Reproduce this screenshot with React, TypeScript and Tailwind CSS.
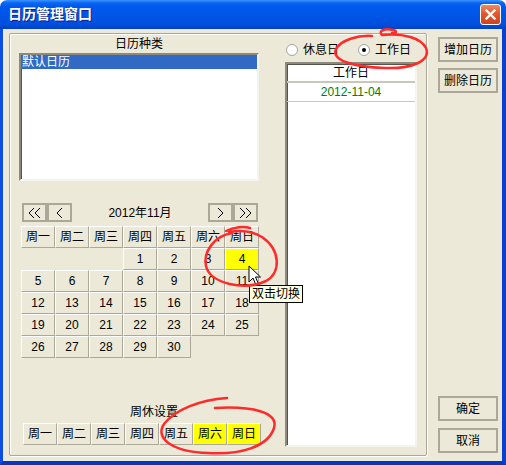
import React from "react";

const FONT = '"Liberation Sans","Noto Sans CJK SC",sans-serif';

const cellCls =
  "w-[34px] h-[22px] flex items-center justify-center border-t border-l border-t-white border-l-white border-b border-r border-b-[#aca899] border-r-[#aca899]";

function Chevron({ dir, double }: { dir: "l" | "r"; double?: boolean }) {
  const one = (x: number) =>
    dir === "l"
      ? `M${x + 5} 1 L${x} 6 L${x + 5} 11`
      : `M${x} 1 L${x + 5} 6 L${x} 11`;
  return (
    <svg width={double ? 13 : 7} height="12" viewBox={double ? "0 0 13 12" : "0 0 7 12"}>
      <path d={one(1)} fill="none" stroke="#000" strokeWidth="1" />
      {double && <path d={one(7)} fill="none" stroke="#000" strokeWidth="1" />}
    </svg>
  );
}

function NavBtn({ children }: { children: React.ReactNode }) {
  return (
    <div className="w-[25px] h-[19px] border-2 border-[#aca899] flex items-center justify-center bg-[#ece9d8]">
      {children}
    </div>
  );
}

function Btn({ label }: { label: string }) {
  return (
    <div className="w-[60px] h-[25px] border-2 border-[#aca899] flex items-center justify-center text-[12px] text-black">
      {label}
    </div>
  );
}

function Radio({ checked, label }: { checked?: boolean; label: string }) {
  return (
    <div className="flex items-center gap-[5px]">
      <div className="w-[12px] h-[12px] rounded-full border border-[#a3a3a3] bg-white flex items-center justify-center">
        {checked && <div className="w-[4px] h-[4px] rounded-full bg-black" />}
      </div>
      <span className="text-[12px] text-black">{label}</span>
    </div>
  );
}

const weekNames = ["周一", "周二", "周三", "周四", "周五", "周六", "周日"];

export default function App() {
  const days: (number | null)[] = [null, null, null];
  for (let i = 1; i <= 30; i++) days.push(i);
  while (days.length < 35) days.push(null);

  return (
    <div className="relative w-[506px] h-[465px] bg-white" style={{ fontFamily: FONT }}>
      <div className="w-[506px] h-[465px] flex flex-col">
        {/* Title bar */}
        <div className="h-[29px] rounded-t-[7px] flex items-center justify-between pl-[8px] pr-[5px] bg-[linear-gradient(to_bottom,#3d95ff_0%,#0a66f0_10%,#0058ee_22%,#0055e5_55%,#0050df_82%,#0042c6_100%)]">
          <span className="text-white font-bold text-[14px] tracking-[0px] [text-shadow:1px_1px_0_#0c1c8c]">
            日历管理窗口
          </span>
          <div className="w-[21px] h-[21px] rounded-[3px] border border-white bg-[linear-gradient(to_bottom,#ee8a66,#e2582e_45%,#cc4421)] flex items-center justify-center">
            <svg width="11" height="11" viewBox="0 0 11 11">
              <path d="M1.5 1.5 L9.5 9.5 M9.5 1.5 L1.5 9.5" stroke="#fff" strokeWidth="2.4" strokeLinecap="square" />
            </svg>
          </div>
        </div>
        {/* Body */}
        <div className="flex-1 flex bg-[#ece9d8] border-l-[3px] border-r-[4px] border-b-[4px] border-l-[#0a4de0] border-r-[#0840cf] border-b-[#0636c4]">
          {/* Group box */}
          <div className="ml-[6px] mt-[4px] w-[418px] h-[423px] flex border border-[#aca899] rounded-[2px] shadow-[1px_1px_0_#ffffff,inset_1px_1px_0_#ffffff]">
            {/* Left column */}
            <div className="ml-[9px] w-[242px] flex flex-col">
              <div className="h-[19px] w-[240px] flex items-center justify-center text-[12px] text-black">
                日历种类
              </div>
              <div className="w-[240px] h-[128px] bg-white border-2 border-t-[#8d8a7d] border-l-[#8d8a7d] border-b-[#f4f3ee] border-r-[#f4f3ee] shadow-[inset_1px_1px_0_#55534a]">
                <div className="h-[14px] bg-[#316ac5] text-white text-[12px] leading-[14px] pl-[1px]">
                  默认日历
                </div>
              </div>
              <div className="ml-[2px] w-[238px] mt-[22px] px-[1px] h-[19px] flex items-center">
                <NavBtn>
                  <Chevron dir="l" double />
                </NavBtn>
                <NavBtn>
                  <Chevron dir="l" />
                </NavBtn>
                <div className="flex-1 text-center text-[12px] text-black">2012年11月</div>
                <NavBtn>
                  <Chevron dir="r" />
                </NavBtn>
                <NavBtn>
                  <Chevron dir="r" double />
                </NavBtn>
              </div>
              <div className="ml-[2px] mt-[4px] grid grid-cols-[repeat(7,34px)]">
                {weekNames.map((w) => (
                  <div key={w} className={cellCls + " text-[12px] text-black"}>
                    {w}
                  </div>
                ))}
                {days.map((d, i) =>
                  d === null ? (
                    <div key={i} className="w-[34px] h-[22px]" />
                  ) : (
                    <div
                      key={i}
                      className={cellCls + (d === 4 ? " bg-[#ffff00]" : "") + " text-[12px] text-black"}
                    >
                      {d}
                    </div>
                  )
                )}
              </div>
              <div className="mt-[46px] h-[16px] pl-[111px] text-[12px] leading-[16px] text-black">周休设置</div>
              <div className="mt-[3px] ml-[4px] flex">
                {weekNames.map((w, i) => (
                  <div key={w} className={cellCls + (i >= 5 ? " bg-[#ffff00]" : "") + " text-[12px] text-black"}>
                    {w}
                  </div>
                ))}
              </div>
            </div>
            {/* Right column */}
            <div className="ml-[24px] w-[132px] flex flex-col">
              <div className="h-[28px] pt-[4px] pl-[1px] flex items-center gap-[19px]">
                <Radio label="休息日" />
                <Radio label="工作日" checked />
              </div>
              <div className="h-[385px] bg-white border-2 border-t-[#8d8a7d] border-l-[#8d8a7d] border-b-[#f4f3ee] border-r-[#f4f3ee] shadow-[inset_1px_1px_0_#55534a] flex flex-col">
                <div className="h-[19px] flex items-center justify-center text-[12px] text-black border-b-2 border-[#c9c7ba]">
                  工作日
                </div>
                <div className="h-[19px] flex items-center justify-center text-[12px] text-[#008000] border-b border-[#c9c7ba]">
                  2012-11-04
                </div>
              </div>
            </div>
          </div>
          {/* Buttons column */}
          <div className="ml-[11px] w-[60px] flex flex-col pt-[8px] pb-[8px]">
            <Btn label="增加日历" />
            <div className="h-[6px]" />
            <Btn label="删除日历" />
            <div className="flex-1" />
            <Btn label="确定" />
            <div className="h-[7px]" />
            <Btn label="取消" />
          </div>
        </div>
      </div>

      {/* Tooltip */}
      <div className="absolute left-[249px] top-[285px] h-[18px] px-[2px] bg-[#ffffe1] border border-black text-[12px] leading-[16px] text-black">
        双击切换
      </div>

      {/* Cursor */}
      <svg className="absolute left-[248px] top-[265px]" width="14" height="22" viewBox="0 0 14 22">
        <path d="M1 1 L1 17 L5 13 L8 20 L10.5 19 L7.5 12 L12.5 12 Z" fill="#fff" stroke="#000" strokeWidth="1" strokeLinejoin="miter" />
      </svg>

      {/* Red hand-drawn annotations */}
      <svg className="absolute left-0 top-0 pointer-events-none" width="506" height="465" viewBox="0 0 506 465">
        <g fill="none" stroke="#ff2a2a" strokeWidth="2.5" strokeLinecap="round" strokeLinejoin="round">
          <path d="M372 36 C358 35, 341 40, 336 49 C331 60, 352 67, 385 68 C412 69, 431 61, 426 48 C421 38, 404 33, 382 35 C378 31, 384 28, 393 30 C398 31, 396 34, 392 33" />
          <path d="M232 233 C214 236, 203 252, 206 266 C210 284, 245 291, 266 281 C281 273, 281 250, 262 237 C252 231, 240 230, 229 232 M226 231 C234 227, 244 226, 250 228" />
          <path d="M227 398 C200 400, 176 409, 164 424 C154 439, 174 452, 208 453 C240 455, 268 447, 274 428 C279 412, 252 406, 215 408" />
        </g>
      </svg>
    </div>
  );
}
